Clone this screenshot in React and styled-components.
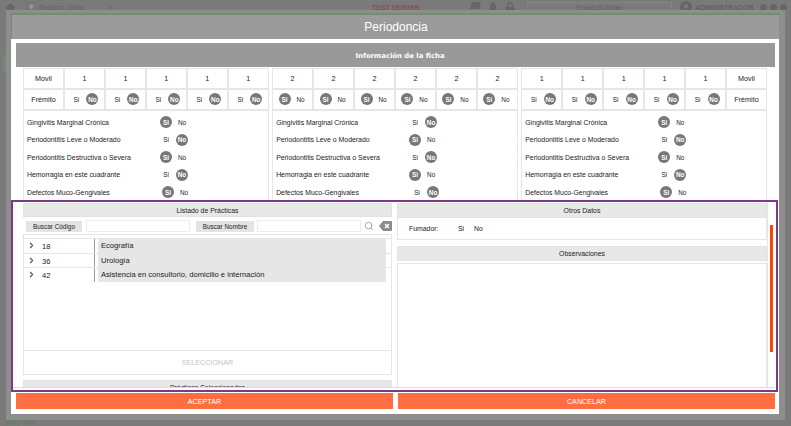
import React from "react";
import styled, { createGlobalStyle } from "styled-components";
import { ChevronRight, Search } from "lucide-react";

const GlobalStyle = createGlobalStyle`
  html, body {
    margin: 0;
    padding: 0;
    background: #7a7a7a;
  }
  * {
    box-sizing: border-box;
  }
`;

const FONT = `"Liberation Sans", "DejaVu Sans", sans-serif`;

const Page = styled.div`
  width: 791px;
  height: 426px;
  overflow: hidden;
  background: linear-gradient(#6f8a6f, #6f8a6f) 3px 55px / 3px 17px no-repeat, #7a7a7a;
  font-family: ${FONT};
  font-size: 6.9px;
  color: #222;
`;

const TopBar = styled.div`
  height: 10px;
  overflow: hidden;
  color: #626262;
`;

const TopRow = styled.div`
  display: flex;
  align-items: center;
  height: 14px;
  padding-left: 5px;
`;

const TabBox = styled.div`
  display: flex;
  align-items: center;
  gap: 2px;
  margin-left: 10px;
  width: 87px;
  height: 14px;
`;

const TabPlus = styled.span`
  display: flex;
  align-items: center;
  justify-content: center;
  width: 11px;
  height: 11px;
  border: 1px solid #64805f;
  color: #9aa89a;
  font-size: 9px;
  font-weight: 700;
  line-height: 1;
`;

const TabClose = styled.span`
  margin-left: auto;
  color: #8c5a52;
`;

const ServerName = styled.span`
  margin-left: 259px;
  width: 97px;
  color: #8c5048;
  font-weight: 700;
`;

const BarIcons = styled.div`
  display: flex;
  align-items: center;
  gap: 8px;
`;

const ProjectBox = styled.div`
  width: 145px;
  height: 11px;
  margin-left: 12px;
  border: 1px solid #848484;
  text-align: center;
  line-height: 9px;
`;

const UserName = styled.span`
  margin-left: 3px;
  font-weight: 700;
  color: #626262;
`;

const Dots = styled.div`
  display: flex;
  gap: 3px;
  margin-left: 6px;
  span {
    width: 7px;
    height: 7px;
    border-radius: 50%;
    background: #666;
  }
`;

const Frame = styled.div`
  width: 779px;
  height: 410px;
  margin-left: 6px;
  padding: 3px 6px 0 5px;
  background: #8e8e8e;
`;

const Modal = styled.div`
  width: 768px;
  border-top: 2px solid #6f8f6f;
`;

const ModalHeader = styled.div`
  height: 24px;
  padding-left: 1px;
  background: #9b9b9b;
  border-left: 1px solid #6f8f6f;
  color: #fff;
  font-size: 12px;
  line-height: 24px;
  text-align: center;
`;

const ModalBody = styled.div`
  background: #fff;
  padding: 4px 0 5px 1px;
`;

const InfoHeader = styled.div`
  height: 24px;
  margin: 0 4px;
  padding: 1px 0 0 9px;
  background: #999;
  color: #fff;
  font-family: "DejaVu Sans", sans-serif;
  font-size: 6.9px;
  font-weight: 700;
  line-height: 24px;
  text-align: center;
`;

const Quadrants = styled.div`
  display: grid;
  grid-template-columns: repeat(3, 1fr);
  gap: 3.4px;
  height: 133px;
  margin: 0 12px 0 11px;
  padding-top: 1px;
`;

const Quadrant = styled.div`
  display: flex;
  flex-direction: column;
  overflow: hidden;
  border: solid #e6e6e6;
  border-width: 0 1px;
`;

const TeethGrid = styled.div`
  display: grid;
  grid-template-columns: repeat(6, 1fr);
  grid-auto-rows: 19px;
  gap: 2px;
  padding: 1px 0 2px;
  background: #e6e6e6;
`;

const ToothCell = styled.div`
  display: flex;
  align-items: center;
  justify-content: center;
  padding-bottom: 1px;
  background: #fff;
  font-size: 7.2px;
`;

const Conditions = styled.div`
  flex: 1;
  padding: 2.5px 0 0 3px;
`;

const ConditionRow = styled.div`
  display: flex;
  align-items: center;
  height: 17.5px;
`;

const ConditionName = styled.span`
  width: 131px;
  white-space: nowrap;
`;

const Toggle = styled.div`
  display: flex;
  margin-left: ${(p) => p.$shift || 0}px;
`;

const Option = styled.span`
  display: flex;
  align-items: center;
  justify-content: center;
  width: 16px;
  font-size: 6.4px;
`;

const OptionMark = styled.span`
  display: flex;
  align-items: center;
  justify-content: center;
  width: 12px;
  height: 12px;
  border-radius: 50%;
  background: ${(p) => (p.$on ? "#777" : "transparent")};
  color: ${(p) => (p.$on ? "#fff" : "#222")};
  font-weight: ${(p) => (p.$on ? 700 : 400)};
`;

const Section = styled.div`
  display: flex;
  height: 192px;
  width: 767px;
  margin-left: -1px;
  border: 2px solid #7b3a85;
`;

const Scroller = styled.div`
  display: flex;
  width: 754px;
  height: 186px;
  overflow: hidden;
  gap: 5px;
  padding: 1px 0 0 10px;
  border-bottom: 1px solid #ddd;
`;

const Column = styled.div`
  display: flex;
  flex-direction: column;
  flex: none;
  width: ${(p) => p.$width}px;
`;

const PanelTitle = styled.div`
  flex: none;
  height: ${(p) => p.$height || 15}px;
  margin-top: ${(p) => p.$top || 0}px;
  background: #e8e8e8;
  border: 1px solid #e2e2e2;
  line-height: ${(p) => (p.$height || 15) - 1}px;
  text-align: center;
`;

const PanelBox = styled.div`
  flex: none;
  height: ${(p) => p.$height}px;
  margin-top: ${(p) => p.$top || 0}px;
  border: 1px solid #e6e6e6;
  border-top-width: ${(p) => (p.$open ? 0 : 1)}px;
`;

const SearchRow = styled.div`
  flex: none;
  display: flex;
  align-items: center;
  height: 18px;
  padding: 1px 0 0 3px;
  border-bottom: 1px solid #e4e4e4;
`;

const SearchButton = styled.button`
  flex: none;
  width: ${(p) => p.$width}px;
  height: 11px;
  margin-left: ${(p) => p.$left || 0}px;
  padding: 0;
  border: 0;
  background: #e4e4e4;
  color: #222;
  font: 6.4px ${FONT};
`;

const SearchInput = styled.input`
  flex: none;
  width: 104px;
  height: 12px;
  margin-left: ${(p) => p.$left || 4}px;
  border: 1px solid #ececec;
  background: #fff;
`;

const IconSlot = styled.span`
  display: flex;
  margin-left: ${(p) => p.$left}px;
  color: #999;
`;

const Rows = styled.div`
  flex: none;
  height: 115px;
  padding-top: 3px;
  border: solid #e6e6e6;
  border-width: 0 1px;
`;

const PracticeRow = styled.div`
  display: flex;
  align-items: stretch;
  height: 14.6px;
  border-top: 1px solid #e6e6e6;
  font-size: 7.6px;
  line-height: 13px;
`;

const Arrow = styled.span`
  display: flex;
  align-items: center;
  width: 18px;
  padding-left: 3px;
  color: #555;
`;

const PracticeCode = styled.span`
  width: 53px;
  padding-top: 1px;
  border-right: 1px solid #999;
`;

const PracticeName = styled.span`
  width: 288px;
  margin-left: 3px;
  padding-left: 3px;
  background: #e6e6e6;
`;

const SelectButton = styled.button`
  display: block;
  flex: none;
  width: 100%;
  height: 25px;
  padding: 0;
  border: 1px solid #e6e6e6;
  background: #fff;
  color: #c4c4c4;
  font: 7.2px ${FONT};
`;

const SmokerRow = styled.div`
  display: flex;
  align-items: center;
  height: 21px;
  padding-left: 11px;
`;

const SmokerLabel = styled.span`
  width: 49px;
`;

const SmokerOption = styled.span`
  width: 16px;
`;

const ScrollTrack = styled.div`
  width: 8px;
  height: 186px;
  padding: 23px 0 0 2px;
  border-left: 1px solid #e6e6e6;
  border-bottom: 1px solid #ddd;
`;

const ScrollThumb = styled.div`
  width: 3px;
  height: 127px;
  background: #ff4400;
`;

const Footer = styled.div`
  display: flex;
  gap: 5px;
  margin: 1px 4px 0;
`;

const ActionButton = styled.button`
  flex: 1;
  height: 16px;
  padding: 0;
  border: 0;
  background: #ff6e40;
  color: #fff;
  font: 7.2px ${FONT};
`;

const StatusBar = styled.div`
  display: flex;
  align-items: center;
  gap: 3px;
  height: 6px;
  padding-left: 6px;
  span {
    width: 14px;
    height: 4px;
    background: #6d7d6d;
  }
`;

const ClearIcon = () => (
  <svg width="13" height="10" viewBox="0 0 13 10">
    <path d="M4 0h8a1 1 0 0 1 1 1v8a1 1 0 0 1-1 1H4L0 5z" fill="#8c8c8c" />
    <path d="M6 3l4 4M10 3l-4 4" stroke="#fff" strokeWidth="1.4" />
  </svg>
);

const HomeIcon = () => (
  <svg width="11" height="9" viewBox="0 0 12 10">
    <path d="M6 0l6 5h-2v5H7V7H5v3H2V5H0z" fill="#666" />
  </svg>
);

const BookIcon = () => (
  <svg width="12" height="10" viewBox="0 0 12 10">
    <path d="M3 0h9l-2 7H1zM1 8h9v2H1z" fill="#666" />
  </svg>
);

const BellIcon = () => (
  <svg width="8" height="10" viewBox="0 0 8 10">
    <path d="M4 0c2 1 3 3 3 6l1 2H0l1-2c0-3 1-5 3-6zM3 9h2v1H3z" fill="#666" />
  </svg>
);

const LockIcon = () => (
  <svg width="10" height="11" viewBox="0 0 10 11">
    <path d="M2 5V3a3 3 0 0 1 6 0v2h2v6H0V5zm1.5 0h3V3a1.5 1.5 0 0 0-3 0z" fill="#666" />
  </svg>
);

const UserIcon = () => (
  <svg width="12" height="12" viewBox="0 0 12 12">
    <circle cx="6" cy="6" r="6" fill="#666" />
    <circle cx="6" cy="5" r="2.2" fill="#7a7a7a" />
    <path d="M2 11c.5-3 7.5-3 8 0z" fill="#7a7a7a" />
  </svg>
);

const Choice = ({ value, shift }) => (
  <Toggle $shift={shift}>
    <Option>
      <OptionMark $on={value === "si"}>Si</OptionMark>
    </Option>
    <Option>
      <OptionMark $on={value === "no"}>No</OptionMark>
    </Option>
  </Toggle>
);

const conditionNames = [
  "Gingivitis Marginal Crónica",
  "Periodontitis Leve o Moderado",
  "Periodontitis Destructiva o Severa",
  "Hemorragia en este cuadrante",
  "Defectos Muco-Gengivales",
];

const quadrants = [
  {
    teeth: ["Movil", "1", "1", "1", "1", "1"],
    fremito: ["Frémito", "no", "no", "no", "no", "no"],
    conditions: ["si", "no", "si", "no", "si"],
  },
  {
    teeth: ["2", "2", "2", "2", "2", "2"],
    fremito: ["si", "si", "si", "si", "si", "si"],
    conditions: ["no", "si", "no", "si", "no"],
  },
  {
    teeth: ["1", "1", "1", "1", "1", "Movil"],
    fremito: ["no", "no", "no", "no", "no", "Frémito"],
    conditions: ["si", "no", "si", "no", "si"],
  },
];

const practices = [
  { code: "18", name: "Ecografía" },
  { code: "36", name: "Urología" },
  { code: "42", name: "Asistencia en consultorio, domicilio e internación" },
];

export default function App() {
  return (
    <Page>
      <GlobalStyle />
      <TopBar>
        <TopRow>
          <HomeIcon />
          <TabBox>
            <TabPlus>+</TabPlus>
            <span>Registro Único</span>
            <TabClose>×</TabClose>
          </TabBox>
          <ServerName>TEST SERVER</ServerName>
          <BarIcons>
            <BookIcon />
            <BellIcon />
            <LockIcon />
          </BarIcons>
          <ProjectBox>Proyecto Angel</ProjectBox>
          <IconSlot $left={8}>
            <UserIcon />
          </IconSlot>
          <UserName>ADMINISTRADOR</UserName>
          <Dots>
            <span />
            <span />
            <span />
          </Dots>
        </TopRow>
      </TopBar>
      <Frame>
        <Modal>
          <ModalHeader>Periodoncia</ModalHeader>
          <ModalBody>
            <InfoHeader>Información de la ficha</InfoHeader>
            <Quadrants>
              {quadrants.map((q, i) => (
                <Quadrant key={i}>
                  <TeethGrid>
                    {q.teeth.map((t, j) => (
                      <ToothCell key={j}>{t}</ToothCell>
                    ))}
                    {q.fremito.map((f, j) => (
                      <ToothCell key={j}>
                        {f === "si" || f === "no" ? <Choice value={f} /> : f}
                      </ToothCell>
                    ))}
                  </TeethGrid>
                  <Conditions>
                    {conditionNames.map((name, j) => (
                      <ConditionRow key={name}>
                        <ConditionName>{name}</ConditionName>
                        <Choice value={q.conditions[j]} shift={j === 4 ? 2 : 0} />
                      </ConditionRow>
                    ))}
                  </Conditions>
                </Quadrant>
              ))}
            </Quadrants>
            <Section>
              <Scroller>
                <Column $width={369}>
                  <PanelTitle $height={14}>Listado de Prácticas</PanelTitle>
                  <SearchRow>
                    <SearchButton $width={56}>Buscar Código</SearchButton>
                    <SearchInput />
                    <SearchButton $width={58} $left={6}>Buscar Nombre</SearchButton>
                    <SearchInput $left={3} />
                    <IconSlot $left={3}>
                      <Search size={10} strokeWidth={2} />
                    </IconSlot>
                    <IconSlot $left={5}>
                      <ClearIcon />
                    </IconSlot>
                  </SearchRow>
                  <Rows>
                    {practices.map((p) => (
                      <PracticeRow key={p.code}>
                        <Arrow>
                          <ChevronRight size={9} strokeWidth={3} />
                        </Arrow>
                        <PracticeCode>{p.code}</PracticeCode>
                        <PracticeName>{p.name}</PracticeName>
                      </PracticeRow>
                    ))}
                  </Rows>
                  <SelectButton>SELECCIONAR</SelectButton>
                  <PanelTitle $top={5}>Prácticas Seleccionadas</PanelTitle>
                </Column>
                <Column $width={370}>
                  <PanelTitle>Otros Datos</PanelTitle>
                  <PanelBox $height={22} $open>
                    <SmokerRow>
                      <SmokerLabel>Fumador:</SmokerLabel>
                      <SmokerOption>Si</SmokerOption>
                      <SmokerOption>No</SmokerOption>
                    </SmokerRow>
                  </PanelBox>
                  <PanelTitle $top={6}>Observaciones</PanelTitle>
                  <PanelBox $height={140} $top={2} />
                </Column>
              </Scroller>
              <ScrollTrack>
                <ScrollThumb />
              </ScrollTrack>
            </Section>
            <Footer>
              <ActionButton>ACEPTAR</ActionButton>
              <ActionButton>CANCELAR</ActionButton>
            </Footer>
          </ModalBody>
        </Modal>
      </Frame>
      <StatusBar>
        <span />
        <span />
      </StatusBar>
    </Page>
  );
}
